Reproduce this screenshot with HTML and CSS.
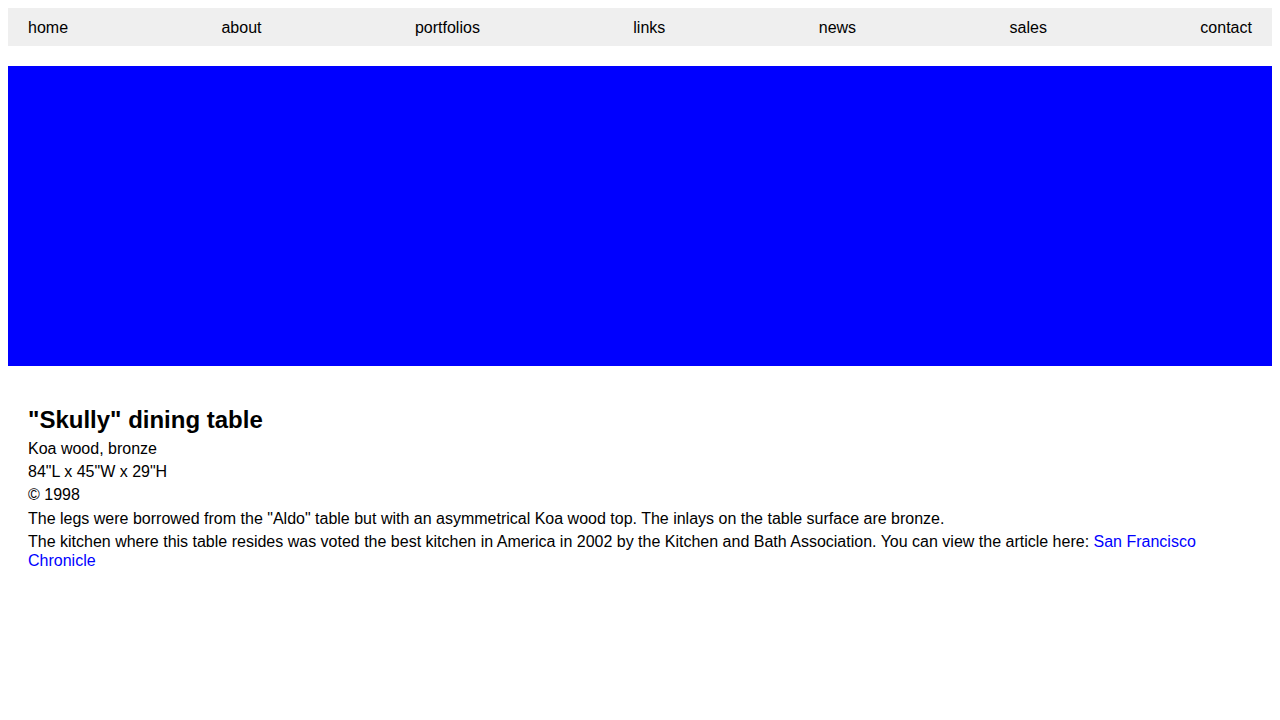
FILE: index.html
```html
<!DOCTYPE html>
<html>
<head>
<meta charset="utf-8">
<link rel="stylesheet" href="styles.css">
</head>
<body>
<nav class="nav">
  <a href="#">home</a>
  <a href="#">about</a>
  <a href="#">portfolios</a>
  <a href="#">links</a>
  <a href="#">news</a>
  <a href="#">sales</a>
  <a href="#">contact</a>
</nav>
<div class="hero"></div>
<main class="content">
  <h1 class="title">"Skully" dining table</h1>
  <p>Koa wood, bronze</p>
  <p>84"L x 45"W x 29"H</p>
  <p>© 1998</p>
  <p>The legs were borrowed from the "Aldo" table but with an asymmetrical Koa wood top. The inlays on the table surface are bronze.</p>
  <p>The kitchen where this table resides was voted the best kitchen in America in 2002 by the Kitchen and Bath Association. You can view the article here: <a class="link" href="#">San Francisco Chronicle</a></p>
</main>
</body>
</html>
```
FILE: styles.css
```css
body {
  margin: 8px;
  font-family: "Liberation Sans", Arial, sans-serif;
  font-size: 16px;
  color: #000;
  background: #fff;
}
.nav {
  display: flex;
  justify-content: space-between;
  background: #efefef;
  padding: 9.6px 20px;
  line-height: 19.2px;
}
.nav a {
  color: #000;
  text-decoration: none;
}
.hero {
  margin-top: 20px;
  height: 300px;
  background: #0000ff;
}
.content {
  margin-top: 20px;
  padding: 19.6px 20px 20px;
  display: flex;
  flex-direction: column;
  gap: 4.1px;
  line-height: 1.2;
}
.title {
  margin: 0;
  font-size: 24px;
  font-weight: bold;
  line-height: 1.2;
}
.content p {
  margin: 0;
}
.link {
  color: #0000ff;
  text-decoration: none;
}
```
